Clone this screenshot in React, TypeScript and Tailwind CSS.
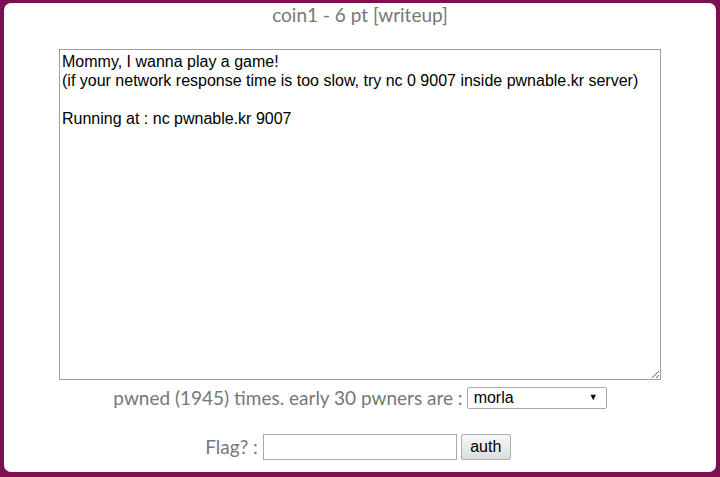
import React from "react";

export default function App() {
  return (
    <div className="h-[477px] w-[720px] bg-[#7b1150] pt-[3px] pl-[4px] pr-[4px] pb-[5px]">
      <div className="h-full w-full bg-white rounded-[7px] flex flex-col items-center">
        <div className="mt-0 text-[19px] leading-[24px] text-[#777777] font-[Lato,sans-serif]">
          coin1 - 6 pt [writeup]
        </div>
        <textarea
          readOnly
          className="mt-[22px] w-[602px] h-[331px] border border-[#a0a0a0] px-[2px] py-[2px] text-[16px] leading-[19px] text-black font-['Liberation_Sans',Arial,sans-serif] outline-none resize"
          value={
            "Mommy, I wanna play a game!\n(if your network response time is too slow, try nc 0 9007 inside pwnable.kr server)\n\nRunning at : nc pwnable.kr 9007"
          }
        />
        <div className="mt-[7px] flex items-center h-[22px]">
          <span className="text-[19px] leading-[22px] text-[#777777] font-[Lato,sans-serif]">
            pwned (1945) times. early 30 pwners are :
          </span>
          <div className="ml-[4px] w-[140px] h-[22px] border border-[#a9a9a9] rounded-[2px] flex items-center justify-between pl-[6px] pr-[8px] bg-white text-[16px] text-black font-['Liberation_Sans',Arial,sans-serif]">
            <span>morla</span>
            <span className="text-[9px]">▼</span>
          </div>
        </div>
        <div className="mt-[25px] flex items-center h-[26px] -ml-[4px]">
          <span className="text-[19px] leading-[22px] text-[#777777] font-[Lato,sans-serif]">
            Flag? :
          </span>
          <input className="ml-[5px] w-[194px] h-[26px] border border-[#a9a9a9] outline-none" />
          <button className="ml-[4px] w-[50px] h-[26px] border border-[#adadad] rounded-[2px] bg-gradient-to-b from-[#f8f8f8] to-[#dcdcdc] text-[16px] leading-[20px] text-black font-['Liberation_Sans',Arial,sans-serif]">
            auth
          </button>
        </div>
      </div>
    </div>
  );
}
